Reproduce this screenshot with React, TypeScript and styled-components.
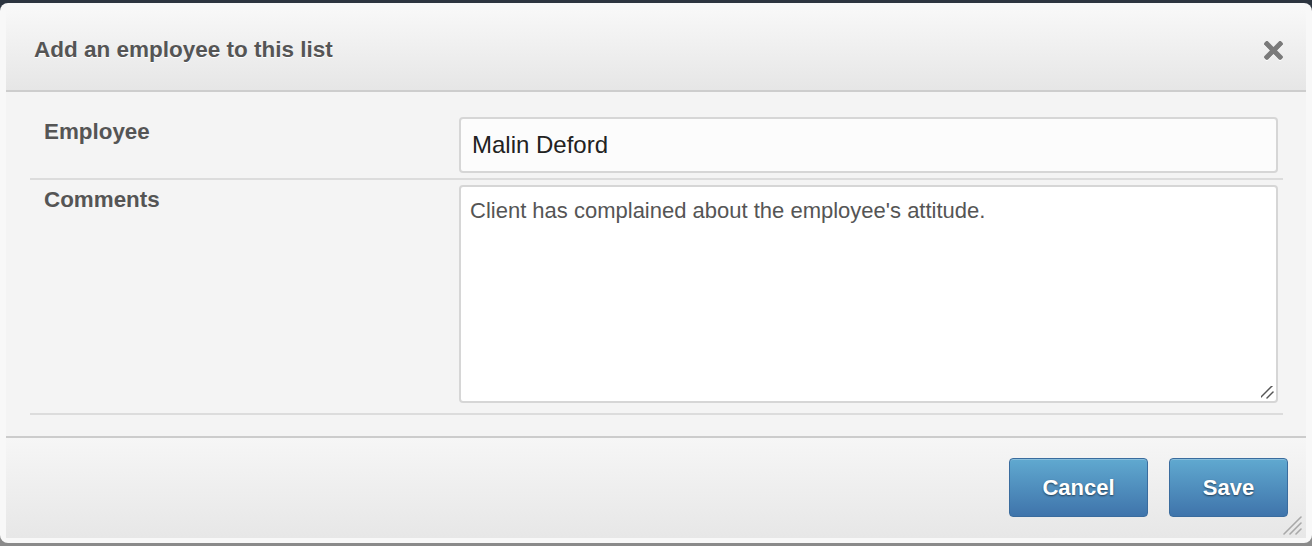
import React from "react";
import styled, { createGlobalStyle } from "styled-components";

const GlobalStyle = createGlobalStyle`
  html, body { margin: 0; padding: 0; }
  body {
    font-family: "Liberation Sans", Arial, Helvetica, sans-serif;
    background: #8a8a8a;
  }
  * { box-sizing: border-box; }
`;

const Page = styled.div`
  width: 1312px;
  height: 546px;
  overflow: hidden;
  background: linear-gradient(to bottom, #2d3540 0, #2d3540 30px, #8a8a8a 30px);
  padding-top: 3px;
`;

const Dialog = styled.div`
  position: relative;
  width: 1312px;
  height: 540px;
  background: #f8f8f8;
  border-radius: 8px;
  padding: 1px 6px 5px 6px;
  display: flex;
  flex-direction: column;
`;

const Header = styled.div`
  height: 88px;
  flex: none;
  display: flex;
  align-items: center;
  justify-content: space-between;
  padding: 6px 22px 0 28px;
  background: linear-gradient(to bottom, #f9f9f9 0%, #e6e6e6 100%);
  border-bottom: 2px solid #cdcdcd;
  border-radius: 6px 6px 0 0;
`;

const Title = styled.h1`
  margin: 0;
  font-size: 22.5px;
  line-height: 26px;
  font-weight: 700;
  color: #555555;
  text-shadow: 0 1px 0 #ffffff;
`;

const CloseButton = styled.button`
  border: 0;
  background: transparent;
  padding: 0;
  width: 21px;
  height: 21px;
  display: flex;
  align-items: center;
  justify-content: center;
  color: #7a7a7a;
  cursor: pointer;
  filter: drop-shadow(0 1px 0 #ffffff);
`;

const Body = styled.div`
  flex: 1;
  background: #f4f4f4;
  padding: 0 23px 0 24px;
`;

const Row = styled.div<{ $top: number; $bottom: number }>`
  display: grid;
  grid-template-columns: 415px 1fr;
  padding: ${(p) => p.$top}px 5px ${(p) => p.$bottom}px 14px;
  border-bottom: 2px solid #dcdcdc;
`;

const Label = styled.label`
  display: block;
  margin-top: 2px;
  font-size: 22.4px;
  line-height: 26px;
  font-weight: 700;
  color: #555555;
`;

const TextInput = styled.input`
  width: 100%;
  height: 56px;
  border: 2px solid #d6d6d6;
  border-radius: 4px;
  background: #fcfcfc;
  padding: 0 11px;
  font-family: "Liberation Sans", Arial, Helvetica, sans-serif;
  font-size: 24px;
  color: #222222;
  outline: none;
`;

const TextArea = styled.textarea`
  display: block;
  width: 100%;
  height: 218px;
  border: 2px solid #d6d6d6;
  border-radius: 4px;
  background: #ffffff;
  padding: 11px 9px;
  font-family: "Liberation Sans", Arial, Helvetica, sans-serif;
  font-size: 22px;
  line-height: 26px;
  color: #555555;
  outline: none;
  resize: both;

  &::-webkit-resizer {
    background: url("data:image/svg+xml,%3Csvg xmlns='http://www.w3.org/2000/svg' width='18' height='18' viewBox='0 0 18 18'%3E%3Cg stroke='%23555' stroke-width='1.5' stroke-linecap='round'%3E%3Cline x1='2' y1='15' x2='15' y2='2'/%3E%3Cline x1='9' y1='15' x2='15' y2='9'/%3E%3C/g%3E%3C/svg%3E") no-repeat right bottom;
  }
`;

const Footer = styled.div`
  height: 102px;
  flex: none;
  display: flex;
  justify-content: flex-end;
  align-items: flex-start;
  gap: 21px;
  padding: 20px 18px 0 0;
  border-top: 2px solid #cccccc;
  background: linear-gradient(to bottom, #f6f6f6 0%, #e7e7e7 100%);
`;

const Button = styled.button<{ $width: number }>`
  width: ${(p) => p.$width}px;
  height: 59px;
  border: 1px solid #3a6c9e;
  border-radius: 4px;
  background: linear-gradient(to bottom, #60a9d0 0%, #3f74ab 100%);
  box-shadow: inset 0 1px 0 rgba(255, 255, 255, 0.25);
  font-family: "Liberation Sans", Arial, Helvetica, sans-serif;
  font-size: 22px;
  font-weight: 700;
  color: #ffffff;
  text-shadow: 0 1px 2px rgba(0, 0, 0, 0.55);
  cursor: pointer;
`;

const Grip = styled.svg`
  position: absolute;
  right: 10px;
  bottom: 8px;
`;

export default function App() {
  return (
    <>
      <GlobalStyle />
      <Page>
        <Dialog>
          <Header>
            <Title>Add an employee to this list</Title>
            <CloseButton aria-label="Close">
              <svg width="19" height="19" viewBox="0 84 352 344" fill="currentColor">
                <path d="M242.72 256l100.07-100.07c12.28-12.28 12.28-32.19 0-44.48l-22.24-22.24c-12.28-12.28-32.19-12.28-44.48 0L176 189.28 75.930 89.21c-12.28-12.28-32.190-12.28-44.48 0L9.21 111.45c-12.28 12.28-12.28 32.19 0 44.48L109.28 256 9.21 356.07c-12.28 12.28-12.28 32.19 0 44.48l22.24 22.24c12.28 12.28 32.2 12.28 44.48 0L176 322.72l100.07 100.07c12.28 12.28 32.2 12.28 44.48 0l22.24-22.24c12.28-12.28 12.28-32.19 0-44.48L242.720 256z" />
              </svg>
            </CloseButton>
          </Header>
          <Body>
            <Row $top={25} $bottom={5}>
              <Label htmlFor="employee">Employee</Label>
              <TextInput id="employee" defaultValue="Malin Deford" />
            </Row>
            <Row $top={5} $bottom={10}>
              <Label htmlFor="comments">Comments</Label>
              <TextArea
                id="comments"
                defaultValue="Client has complained about the employee's attitude."
              />
            </Row>
          </Body>
          <Footer>
            <Button $width={139}>Cancel</Button>
            <Button $width={119}>Save</Button>
          </Footer>
          <Grip width="20" height="20" viewBox="0 0 20 20">
            <g stroke="#a8a8a8" strokeWidth="1.6" strokeLinecap="round">
              <line x1="2" y1="19" x2="19" y2="2" />
              <line x1="8" y1="19" x2="19" y2="8" />
              <line x1="14" y1="19" x2="19" y2="14" />
            </g>
          </Grip>
        </Dialog>
      </Page>
    </>
  );
}
